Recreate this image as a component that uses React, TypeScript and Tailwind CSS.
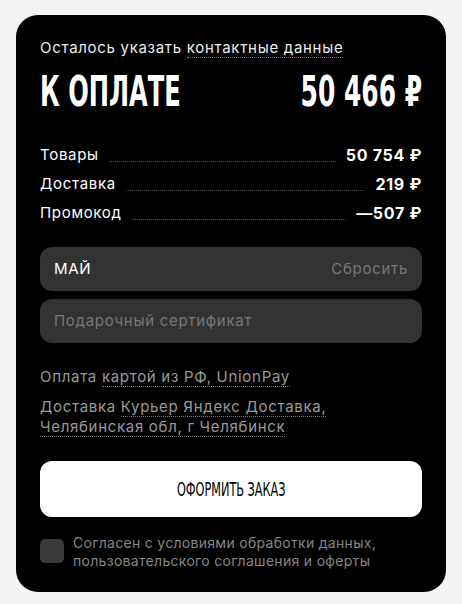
import React from 'react';

const body = "font-['Inter','Noto_Sans',sans-serif] tracking-[0.7px]";
const cond = "font-['DejaVu_Sans_Condensed','Liberation_Sans',sans-serif] whitespace-nowrap";

interface Line {
  label: string;
  value: string;
}

const lines: Line[] = [
  { label: 'Товары', value: '50 754 ₽' },
  { label: 'Доставка', value: '219 ₽' },
  { label: 'Промокод', value: '—507 ₽' },
];

const dotted = 'border-b border-dotted border-[#777]';

export default function App() {
  return (
    <div className={`min-h-[604px] w-[462px] bg-[#f3f3f5] px-4 pt-[15px] ${body}`}>
      <div className="rounded-[22px] bg-black px-6 pt-[23px] pb-[22px]">
        <p className="text-[15px] leading-5 text-[#ececec]">
          Осталось указать <span className={dotted}>контактные данные</span>
        </p>

        {/* condensed heading: fixed boxes so the scaled text doesn't push the row */}
        <div className={`mt-[10px] flex items-center justify-between text-[42px] font-bold leading-[48px] tracking-normal text-white ${cond}`}>
          <div className="w-[150px]">
            <span className="inline-block origin-left scale-x-[0.64]">К ОПЛАТЕ</span>
          </div>
          <div className="flex w-[130px] justify-end">
            <span className="inline-block shrink-0 origin-right scale-x-[0.66]">50 466 ₽</span>
          </div>
        </div>

        <div className="mt-[29px] flex flex-col gap-[9px]">
          {lines.map((line) => (
            <div key={line.label} className="flex items-end gap-[10px] text-white">
              <span className="text-[15px] leading-5">{line.label}</span>
              <span className="mb-[3px] flex-1 border-b border-dotted border-[#4a4a4a]" />
              <span className="text-[16px] font-bold leading-5">{line.value}</span>
            </div>
          ))}
        </div>

        <div className="mt-6 flex flex-col gap-2">
          <div className="flex h-11 items-center justify-between rounded-xl bg-[#333] px-[14px]">
            <span className="text-[15px] text-white">МАЙ</span>
            <span className="text-[15px] text-[#777]">Сбросить</span>
          </div>
          <div className="flex h-11 items-center rounded-xl bg-[#333] px-[14px]">
            <span className="text-[15px] text-[#777]">Подарочный сертификат</span>
          </div>
        </div>

        <div className="mt-6 text-[15px] leading-5 text-[#9a9a9a]">
          <p>
            Оплата <span className={dotted}>картой из РФ, UnionPay</span>
          </p>
          <p className="mt-[10px]">
            Доставка <span className={dotted}>Курьер Яндекс Доставка,</span>
            <br />
            <span className={dotted}>Челябинская обл, г Челябинск</span>
          </p>
        </div>

        <button className="mt-6 flex h-14 w-full items-center justify-center rounded-xl bg-white">
          <span className={`inline-block scale-x-[0.66] text-[19px] font-normal tracking-normal text-black ${cond}`}>
            ОФОРМИТЬ ЗАКАЗ
          </span>
        </button>

        <div className="mt-[17px] flex items-start gap-[9px]">
          <div className="mt-[5px] h-6 w-6 shrink-0 rounded-[5px] bg-[#3a3a3a]" />
          <p className="text-[14px] leading-[18px] tracking-[0.3px] text-[#858585]">
            Согласен с условиями обработки данных,
            <br />
            пользовательского соглашения и оферты
          </p>
        </div>
      </div>
    </div>
  );
}
